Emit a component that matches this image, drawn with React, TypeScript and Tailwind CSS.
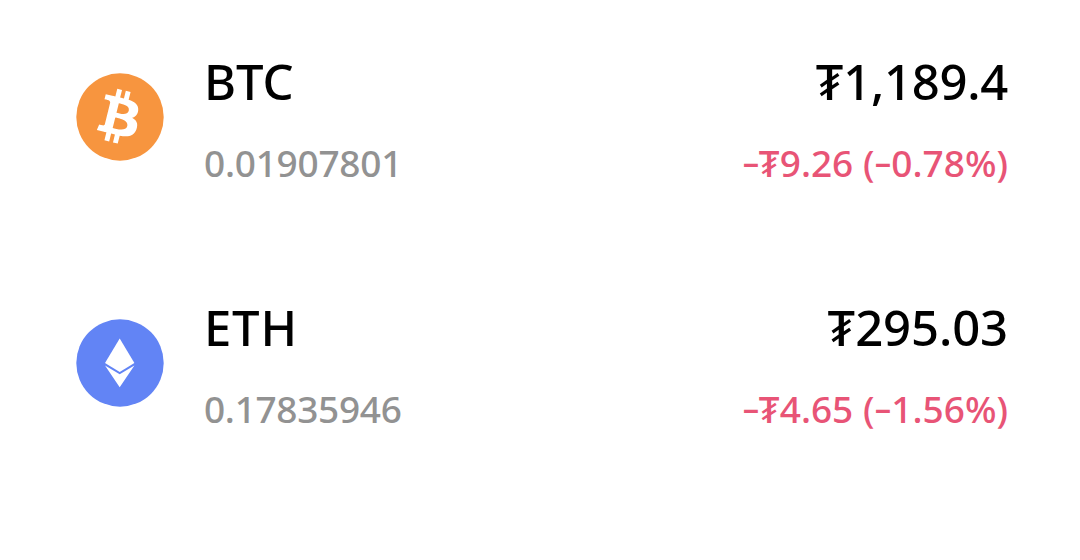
type Asset = {
  symbol: string;
  amount: string;
  value: string;
  change: string;
  percent: string;
  icon: React.ReactNode;
  symbolTracking: string;
  amountTracking: string;
  valueTracking: string;
};

function BitcoinIcon() {
  return (
    <svg viewBox="0 0 88 88" className="size-22 shrink-0">
      <circle cx="44" cy="44" r="43.7" fill="#f7953f" />
      <path
        transform="translate(-1.6 -0.8) scale(2.75)"
        fill="#fff"
        d="M23.189 14.02c.314-2.096-1.283-3.223-3.465-3.975l.708-2.84-1.728-.43-.69 2.765c-.454-.114-.92-.22-1.385-.326l.695-2.783L15.596 6l-.708 2.839c-.376-.086-.746-.17-1.104-.26l.002-.009-2.384-.595-.46 1.846s1.283.294 1.256.312c.7.175.826.638.805 1.006l-.806 3.235c.048.012.11.03.18.057l-.183-.045-1.13 4.532c-.086.212-.303.531-.793.41.018.025-1.256-.313-1.256-.313l-.858 1.978 2.25.561c.418.105.828.215 1.231.318l-.715 2.872 1.727.43.708-2.84c.472.127.93.245 1.378.357l-.706 2.828 1.728.43.715-2.866c2.948.558 5.164.333 6.097-2.333.752-2.146-.037-3.385-1.588-4.192 1.13-.26 1.98-1.003 2.207-2.538zm-3.95 5.538c-.533 2.147-4.148.986-5.32.695l.95-3.805c1.172.293 4.929.872 4.37 3.11zm.535-5.569c-.487 1.953-3.495.96-4.47.717l.86-3.45c.975.243 4.118.696 3.61 2.733z"
      />
    </svg>
  );
}

function EthereumIcon() {
  return (
    <svg viewBox="0 0 88 88" className="size-22 shrink-0">
      <circle cx="44" cy="44" r="43.7" fill="#6284f5" />
      <path fill="#fff" d="M43.7 19.5 58.4 44.1 43.7 53 29 44.1Z" />
      <path fill="#fff" d="M29 46.6 43.7 55.3 58.4 46.6 43.7 68.2Z" />
    </svg>
  );
}

const assets: Asset[] = [
  {
    symbol: "BTC",
    amount: "0.01907801",
    value: "₮1,189.4",
    change: "₮9.26",
    percent: "0.78%",
    icon: <BitcoinIcon />,
    symbolTracking: "tracking-normal",
    amountTracking: "tracking-[-0.25px]",
    valueTracking: "tracking-[-0.3px]",
  },
  {
    symbol: "ETH",
    amount: "0.17835946",
    value: "₮295.03",
    change: "₮4.65",
    percent: "1.56%",
    icon: <EthereumIcon />,
    symbolTracking: "tracking-[0.8px]",
    amountTracking: "tracking-[-0.3px]",
    valueTracking: "tracking-[-0.1px]",
  },
];

function Minus() {
  return (
    <span className="inline-block origin-left -translate-y-[2px] scale-x-150 mr-[5px]">-</span>
  );
}

function AssetRow({ asset }: { asset: Asset }) {
  return (
    <div className="flex h-[246px] items-start pl-[76px] pr-[72px]">
      <div className="pt-[73px]">{asset.icon}</div>
      <div className="ml-10 flex flex-1 justify-between pt-[51px] whitespace-nowrap">
        <div className="flex flex-col gap-[27px]">
          <span className={`text-[49px] leading-[60px] text-black ${asset.symbolTracking}`}>
            {asset.symbol}
          </span>
          <span className={`text-[37px] leading-[50px] text-[#929292] ${asset.amountTracking}`}>
            {asset.amount}
          </span>
        </div>
        <div className="flex flex-col items-end gap-[27px]">
          <span className={`text-[49px] leading-[60px] text-black ${asset.valueTracking}`}>
            {asset.value}
          </span>
          <span className="text-[37px] leading-[50px] text-[#e85476]">
            <Minus />
            {asset.change} (<Minus />
            {asset.percent})
          </span>
        </div>
      </div>
    </div>
  );
}

export default function App() {
  return (
    <div className="h-[560px] w-[1080px] overflow-hidden bg-white font-['Noto_Sans',sans-serif] font-medium">
      {assets.map((asset) => (
        <AssetRow key={asset.symbol} asset={asset} />
      ))}
    </div>
  );
}
